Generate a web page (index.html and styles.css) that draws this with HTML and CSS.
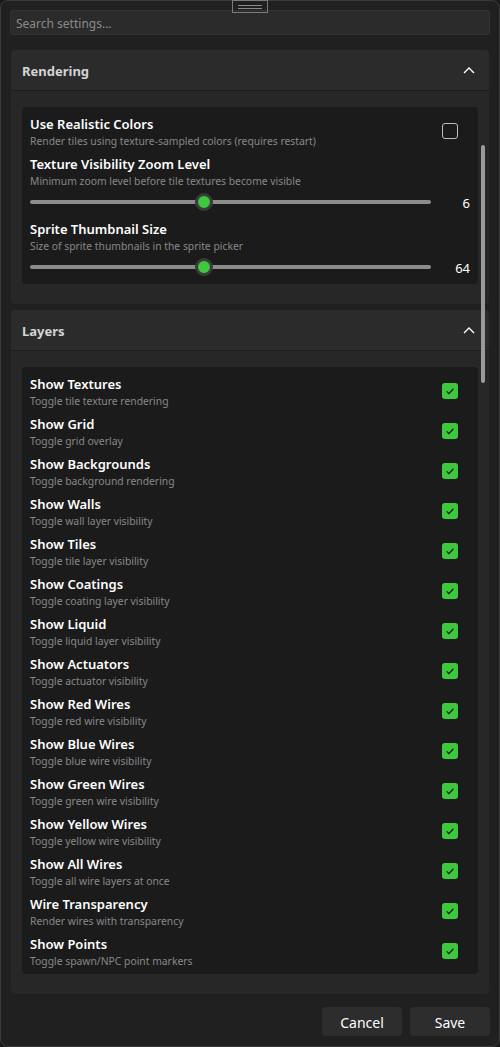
FILE: index.html
```html
<!DOCTYPE html>
<html>
<head>
<meta charset="utf-8">
<link rel="stylesheet" href="styles.css">
</head>
<body>
<div class="window">
  <div class="grip"><span></span><span></span></div>
  <div class="search">Search settings...</div>
  <div class="scroll">
    <div class="scrollthumb"></div>
    <section class="section">
      <div class="sec-head"><span>Rendering</span>
        <svg class="chev" width="12" height="8" viewBox="0 0 12 8"><polyline points="1,7 6,2 11,7" fill="none" stroke="#fff" stroke-width="1.4"/></svg>
      </div>
      <div class="sec-body">
        <div class="card">
          <div class="row">
            <div class="txt"><div class="t">Use Realistic Colors</div><div class="s">Render tiles using texture-sampled colors (requires restart)</div></div>
            <div class="cb off"></div>
          </div>
          <div class="txt"><div class="t">Texture Visibility Zoom Level</div><div class="s">Minimum zoom level before tile textures become visible</div></div>
          <div class="slider-row">
            <div class="track"><div class="thumb" style="left:165px"></div></div>
            <div class="val">6</div>
          </div>
          <div class="txt"><div class="t">Sprite Thumbnail Size</div><div class="s">Size of sprite thumbnails in the sprite picker</div></div>
          <div class="slider-row">
            <div class="track"><div class="thumb" style="left:165px"></div></div>
            <div class="val">64</div>
          </div>
        </div>
      </div>
    </section>
    <section class="section">
      <div class="sec-head"><span>Layers</span>
        <svg class="chev" width="12" height="8" viewBox="0 0 12 8"><polyline points="1,7 6,2 11,7" fill="none" stroke="#fff" stroke-width="1.4"/></svg>
      </div>
      <div class="sec-body">
        <div class="card">
          <div class="row"><div class="txt"><div class="t">Show Textures</div><div class="s">Toggle tile texture rendering</div></div><div class="cb on"><svg width="16" height="16" viewBox="0 0 16 16"><path d="M4.6 8.4 L6.9 10.6 L11.4 5.8" fill="none" stroke="#1b1b1b" stroke-width="1.3"/></svg></div></div>
          <div class="row"><div class="txt"><div class="t">Show Grid</div><div class="s">Toggle grid overlay</div></div><div class="cb on"><svg width="16" height="16" viewBox="0 0 16 16"><path d="M4.6 8.4 L6.9 10.6 L11.4 5.8" fill="none" stroke="#1b1b1b" stroke-width="1.3"/></svg></div></div>
          <div class="row"><div class="txt"><div class="t">Show Backgrounds</div><div class="s">Toggle background rendering</div></div><div class="cb on"><svg width="16" height="16" viewBox="0 0 16 16"><path d="M4.6 8.4 L6.9 10.6 L11.4 5.8" fill="none" stroke="#1b1b1b" stroke-width="1.3"/></svg></div></div>
          <div class="row"><div class="txt"><div class="t">Show Walls</div><div class="s">Toggle wall layer visibility</div></div><div class="cb on"><svg width="16" height="16" viewBox="0 0 16 16"><path d="M4.6 8.4 L6.9 10.6 L11.4 5.8" fill="none" stroke="#1b1b1b" stroke-width="1.3"/></svg></div></div>
          <div class="row"><div class="txt"><div class="t">Show Tiles</div><div class="s">Toggle tile layer visibility</div></div><div class="cb on"><svg width="16" height="16" viewBox="0 0 16 16"><path d="M4.6 8.4 L6.9 10.6 L11.4 5.8" fill="none" stroke="#1b1b1b" stroke-width="1.3"/></svg></div></div>
          <div class="row"><div class="txt"><div class="t">Show Coatings</div><div class="s">Toggle coating layer visibility</div></div><div class="cb on"><svg width="16" height="16" viewBox="0 0 16 16"><path d="M4.6 8.4 L6.9 10.6 L11.4 5.8" fill="none" stroke="#1b1b1b" stroke-width="1.3"/></svg></div></div>
          <div class="row"><div class="txt"><div class="t">Show Liquid</div><div class="s">Toggle liquid layer visibility</div></div><div class="cb on"><svg width="16" height="16" viewBox="0 0 16 16"><path d="M4.6 8.4 L6.9 10.6 L11.4 5.8" fill="none" stroke="#1b1b1b" stroke-width="1.3"/></svg></div></div>
          <div class="row"><div class="txt"><div class="t">Show Actuators</div><div class="s">Toggle actuator visibility</div></div><div class="cb on"><svg width="16" height="16" viewBox="0 0 16 16"><path d="M4.6 8.4 L6.9 10.6 L11.4 5.8" fill="none" stroke="#1b1b1b" stroke-width="1.3"/></svg></div></div>
          <div class="row"><div class="txt"><div class="t">Show Red Wires</div><div class="s">Toggle red wire visibility</div></div><div class="cb on"><svg width="16" height="16" viewBox="0 0 16 16"><path d="M4.6 8.4 L6.9 10.6 L11.4 5.8" fill="none" stroke="#1b1b1b" stroke-width="1.3"/></svg></div></div>
          <div class="row"><div class="txt"><div class="t">Show Blue Wires</div><div class="s">Toggle blue wire visibility</div></div><div class="cb on"><svg width="16" height="16" viewBox="0 0 16 16"><path d="M4.6 8.4 L6.9 10.6 L11.4 5.8" fill="none" stroke="#1b1b1b" stroke-width="1.3"/></svg></div></div>
          <div class="row"><div class="txt"><div class="t">Show Green Wires</div><div class="s">Toggle green wire visibility</div></div><div class="cb on"><svg width="16" height="16" viewBox="0 0 16 16"><path d="M4.6 8.4 L6.9 10.6 L11.4 5.8" fill="none" stroke="#1b1b1b" stroke-width="1.3"/></svg></div></div>
          <div class="row"><div class="txt"><div class="t">Show Yellow Wires</div><div class="s">Toggle yellow wire visibility</div></div><div class="cb on"><svg width="16" height="16" viewBox="0 0 16 16"><path d="M4.6 8.4 L6.9 10.6 L11.4 5.8" fill="none" stroke="#1b1b1b" stroke-width="1.3"/></svg></div></div>
          <div class="row"><div class="txt"><div class="t">Show All Wires</div><div class="s">Toggle all wire layers at once</div></div><div class="cb on"><svg width="16" height="16" viewBox="0 0 16 16"><path d="M4.6 8.4 L6.9 10.6 L11.4 5.8" fill="none" stroke="#1b1b1b" stroke-width="1.3"/></svg></div></div>
          <div class="row"><div class="txt"><div class="t">Wire Transparency</div><div class="s">Render wires with transparency</div></div><div class="cb on"><svg width="16" height="16" viewBox="0 0 16 16"><path d="M4.6 8.4 L6.9 10.6 L11.4 5.8" fill="none" stroke="#1b1b1b" stroke-width="1.3"/></svg></div></div>
          <div class="row"><div class="txt"><div class="t">Show Points</div><div class="s">Toggle spawn/NPC point markers</div></div><div class="cb on"><svg width="16" height="16" viewBox="0 0 16 16"><path d="M4.6 8.4 L6.9 10.6 L11.4 5.8" fill="none" stroke="#1b1b1b" stroke-width="1.3"/></svg></div></div>
        </div>
      </div>
    </section>
  </div>
  <div class="footer">
    <div class="btn">Cancel</div>
    <div class="btn">Save</div>
  </div>
</div>
</body>
</html>
```

FILE: styles.css
```css
* { box-sizing: border-box; }
html, body { margin: 0; padding: 0; background: #1a1a1a; }
body { width: 500px; height: 1047px; font-family: "Noto Sans", "Open Sans", sans-serif; }
.window {
  position: relative;
  width: 500px; height: 1047px;
  background: #202020;
  border: 1px solid #3a3a3a;
  border-radius: 8px;
  padding: 9px 9px 0 9px;
  display: flex; flex-direction: column;
}
.grip {
  position: absolute; left: 231px; top: -1px;
  width: 36px; height: 13px;
  border: 1px solid #7a7a7a;
  display: flex; flex-direction: column; align-items: center; justify-content: center; gap: 2px;
}
.grip span { display: block; width: 24px; height: 1px; background: #8a8a8a; }
.search {
  height: 25px;
  background: #2b2b2b;
  border: 1px solid #333;
  border-radius: 3px;
  color: #8a8a8a;
  font-size: 12px;
  line-height: 25px;
  padding-left: 5px;
}
.scroll {
  position: relative;
  margin-top: 15px;
  padding: 0 1px;
  display: flex; flex-direction: column; gap: 6px;
}
.scrollthumb {
  position: absolute; left: 471px; top: 95px;
  width: 4px; height: 238px;
  background: #9a9a9a; border-radius: 2px;
}
.section {
  background: #272727;
  border-radius: 4px;
}
.sec-head {
  height: 41px;
  background: #2b2b2b;
  border-bottom: 1px solid #1e1e1e;
  border-radius: 4px 4px 0 0;
  display: flex; align-items: center; justify-content: space-between;
  padding: 1px 14px 0 11px;
  color: #d4d4d4;
  font-weight: 700;
  font-size: 13px;
}
.chev { margin-top: -2px; }
.sec-body { padding: 16px 11px 20px; }
.card {
  background: #1b1b1b;
  border-radius: 4px;
  padding: 7px 0 0 8px;
}
.row {
  display: flex; align-items: center; justify-content: space-between;
  padding-right: 20px;
  height: 40px; padding-bottom: 6px;
}
.t { color: #ffffff; font-weight: 600; font-size: 13px; line-height: 20px; }
.s { color: #878787; font-size: 10.35px; line-height: 14px; }
.cb { width: 16px; height: 16px; border-radius: 3px; flex: none; }
.cb.off { border: 1px solid #bdbdbd; }
.cb.on { background: #3ec83e; }
.cb svg { display: block; }
.slider-row {
  display: flex; align-items: center; gap: 8px;
  height: 31px; padding: 2px 8px 5px 0;
}
.track {
  position: relative; flex: 1; height: 4px;
  background: #8c8c8c; border-radius: 2px;
}
.thumb {
  position: absolute; top: -7px;
  width: 18px; height: 18px; border-radius: 50%;
  background: #3ec83e;
  border: 3px solid #3a3a3a;
}
.val { width: 31px; text-align: right; color: #fff; font-size: 13px; padding-top: 1px; }
.footer {
  display: flex; justify-content: flex-end; gap: 8px;
  margin-top: 13px; padding-right: 0;
}
.btn {
  width: 80px; height: 29px;
  background: #2d2d2d; border-radius: 4px;
  color: #fff; font-size: 14px; padding-top: 1px;
  display: flex; align-items: center; justify-content: center;
}
```
